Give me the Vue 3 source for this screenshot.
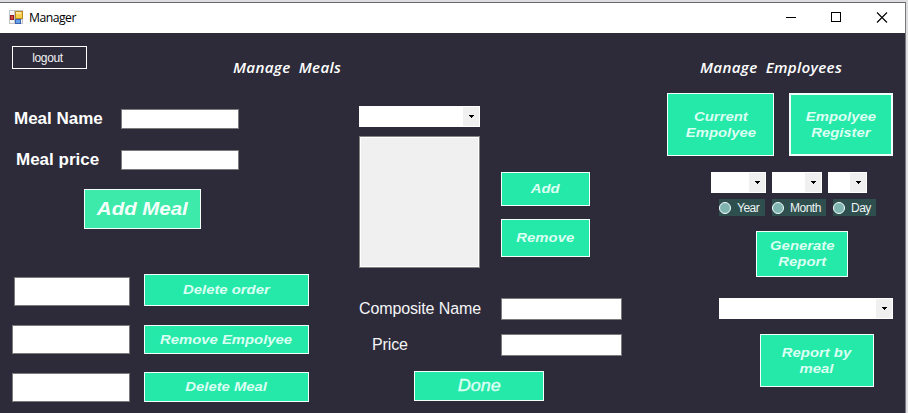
<script setup>
import { h } from 'vue'

const radios = ['Year', 'Month', 'Day']
const deletions = [
  { key: 'order', label: 'Delete order' },
  { key: 'employee', label: 'Remove Empolyee' },
  { key: 'meal', label: 'Delete Meal' },
]

// Drop-down arrow shared by every combo box
const Arrow = () =>
  h('svg', { width: 5, height: 3, viewBox: '0 0 5 3', 'shape-rendering': 'crispEdges' }, [
    h('path', { d: 'M0 0H5V1H4V2H3V3H2V2H1V1H0Z', fill: '#000' }),
  ])
</script>

<template>
  <div class="desktop">
    <div class="window">
      <header class="titlebar">
        <svg class="app-icon" width="15" height="15" viewBox="0 0 15 15">
          <rect x="0.5" y="0.5" width="13" height="13" fill="#f4f4f6" stroke="#c3c3c8" />
          <path d="M5.5 1V14M1 9.5H14" stroke="#c3c3c8" />
          <rect x="6.5" y="1.5" width="7" height="7" fill="#f7cf4b" stroke="#b98b1c" />
          <rect x="7" y="2" width="5" height="2" fill="#fce69a" />
          <rect x="1.5" y="5.5" width="3" height="4" fill="#d8453c" stroke="#8f1d1d" />
          <rect x="6.5" y="9.5" width="5" height="4" fill="#6c9de8" stroke="#3a64b4" />
        </svg>
        <span class="app-title">Manager</span>
        <svg class="controls" width="102" height="12" viewBox="0 0 102 12" fill="none" stroke="#000" shape-rendering="crispEdges">
          <path d="M0 5.5H10" />
          <rect x="45.5" y="0.5" width="9" height="9" />
          <path d="M91 0.5L101 10.5M101 0.5L91 10.5" shape-rendering="auto" stroke-width="1.1" />
        </svg>
      </header>

      <main class="content">
        <section class="col left">
          <div class="top-row">
            <button class="logout">logout</button>
            <h2 class="heading"><span class="heading-meals">Manage Meals</span></h2>
          </div>
          <div class="meal-field name">
            <label><span>Meal Name</span></label><input type="text" />
          </div>
          <div class="meal-field price">
            <label><span>Meal price</span></label><input type="text" />
          </div>
          <button class="btn add-meal"><span>Add Meal</span></button>
          <div class="deletions">
            <div v-for="d in deletions" :key="d.key" class="deletion" :class="d.key">
              <input type="text" />
              <button class="btn"><span>{{ d.label }}</span></button>
            </div>
          </div>
        </section>

        <section class="col middle">
          <div class="picker">
            <div class="lists">
              <div class="combo"><i><Arrow /></i></div>
              <div class="listbox"></div>
            </div>
            <div class="list-actions">
              <button class="btn add"><span>Add</span></button>
              <button class="btn remove"><span>Remove</span></button>
            </div>
          </div>
          <div class="comp-field">
            <label>Composite Name</label><input type="text" />
          </div>
          <div class="comp-field comp-price">
            <label>Price</label><input type="text" />
          </div>
          <button class="btn done"><span>Done</span></button>
        </section>

        <section class="col right">
          <h2 class="heading"><span class="heading-emp">Manage Employees</span></h2>
          <div class="emp-actions">
            <button class="btn current"><span>Current<br />Empolyee</span></button>
            <button class="btn register"><span>Empolyee<br />Register</span></button>
          </div>
          <div class="date-combos">
            <div class="combo year"><i><Arrow /></i></div>
            <div class="combo month"><i><Arrow /></i></div>
            <div class="combo day"><i><Arrow /></i></div>
          </div>
          <div class="radios">
            <div v-for="r in radios" :key="r" class="radio" :class="'r-' + r.toLowerCase()">
              <b></b><span>{{ r }}</span>
            </div>
          </div>
          <button class="btn generate"><span>Generate<br />Report</span></button>
          <div class="combo meal-combo"><i><Arrow /></i></div>
          <button class="btn report"><span>Report by<br />meal</span></button>
        </section>
      </main>
    </div>
  </div>
</template>

<style>
body {
  margin: 0;
  overflow: hidden;
}
</style>

<style scoped>
* {
  box-sizing: border-box;
}
.desktop {
  width: 908px;
  height: 413px;
  padding-top: 2px;
  background: #dedde0;
  font-family: "Liberation Sans", Arial, sans-serif;
}
.window {
  width: 906px;
  height: 411px;
  border-top: 1px solid #68686a;
  border-right: 1px solid #77777c;
  background: #2d2b3a;
}
.titlebar {
  display: flex;
  align-items: flex-start;
  height: 30px;
  background: #fff;
  padding-left: 9px;
}
.app-icon {
  margin-top: 7px;
}
.app-title {
  margin: 6px 0 0 5px;
  font: 12.2px/18px "Open Sans", sans-serif;
  letter-spacing: -0.5px;
  color: #000;
}
.controls {
  margin: 9px 17px 0 auto;
}
.content {
  display: flex;
  height: 380px;
}
.col {
  display: flex;
  flex-direction: column;
  align-items: flex-start;
}
.left {
  width: 350px;
}
.middle {
  width: 290px;
  padding: 73px 0 0 9px;
}
.right {
  width: 265px;
  padding-top: 23px;
}
button,
input {
  display: block;
  margin: 0;
  padding: 0;
  border-radius: 0;
  appearance: none;
}
input {
  border: 1px solid #7a7a7a;
  background: #fff;
}
.btn {
  display: flex;
  align-items: center;
  justify-content: center;
  flex: none;
  border: 1px solid #f2fffb;
  background: #25e9a9;
  color: #dcfff3;
  font: italic bold 13.5px/16px "Liberation Sans", Arial, sans-serif;
  white-space: nowrap;
}
.btn span {
  display: block;
  transform: scaleX(1.1);
}
.heading {
  margin: 0;
  font: italic 600 15.2px/22px "Open Sans", sans-serif;
  letter-spacing: 0.3px;
  word-spacing: 4px;
  color: #fff;
  white-space: nowrap;
}
.heading span {
  display: block;
}
.top-row {
  display: flex;
  padding: 13px 0 0 12px;
}
.logout {
  width: 75px;
  height: 23px;
  padding-right: 4px;
  border: 1px solid #fff;
  background: transparent;
  color: #f2f2f4;
  font: 12px/20px "Liberation Sans", Arial, sans-serif;
  letter-spacing: -0.35px;
}
.top-row .heading {
  height: 22px;
  margin: 10px 0 0 146px;
}
.meal-field {
  display: flex;
  align-items: center;
  height: 20px;
}
.meal-field label {
  width: 121px;
  padding-left: 14px;
  font-size: 17px;
  line-height: 20px;
  font-weight: bold;
  color: #fff;
  white-space: nowrap;
}
.meal-field input {
  width: 118px;
  height: 20px;
}
.meal-field.name {
  margin-top: 31px;
}
.meal-field.price {
  margin-top: 21px;
}
.meal-field.price label {
  padding-left: 16px;
}
.add-meal {
  width: 117px;
  height: 40px;
  margin: 19px 0 0 84px;
  background: #3eeaaa;
  color: #f4fffb;
  font-size: 18.6px;
}
.deletions {
  display: flex;
  flex-direction: column;
  margin-top: 45px;
  padding-left: 12px;
}
.deletion {
  display: flex;
  align-items: flex-end;
  gap: 14px;
}
.deletion input {
  width: 118px;
  height: 29px;
}
.deletion .btn {
  width: 165px;
  height: 29px;
}
.order input {
  width: 116px;
  margin-left: 2px;
}
.order .btn {
  height: 32px;
}
.employee {
  margin-top: 19px;
}
.meal {
  margin-top: 18px;
}
.meal .btn {
  height: 30px;
}
.combo {
  display: flex;
  justify-content: flex-end;
  flex: none;
  height: 21px;
  padding: 1px;
  background: #fff;
}
.combo i {
  display: flex;
  align-items: center;
  justify-content: center;
  width: 16px;
  background: #f0f0f0;
}
.picker {
  display: flex;
  gap: 21px;
}
.lists {
  display: flex;
  flex-direction: column;
  gap: 9px;
  width: 121px;
}
.listbox {
  height: 132px;
  border: 1px solid #838383;
  background: #f0f0f0;
  box-shadow: inset 0 0 0 1px #fff;
}
.list-actions {
  display: flex;
  flex-direction: column;
  gap: 13px;
  padding-top: 66px;
}
.add {
  width: 89px;
  height: 34px;
}
.remove {
  width: 89px;
  height: 38px;
}
.comp-field {
  display: flex;
  align-items: center;
  height: 22px;
  margin-top: 30px;
}
.comp-field label {
  width: 142px;
  font-size: 16px;
  letter-spacing: -0.12px;
  color: #f5f5f7;
  white-space: nowrap;
}
.comp-field input {
  width: 121px;
  height: 22px;
}
.comp-price {
  margin-top: 14px;
}
.comp-price label {
  padding-left: 13px;
}
.done {
  width: 130px;
  height: 30px;
  margin: 15px 0 0 55px;
  font-size: 17px;
  font-weight: normal;
  -webkit-text-stroke: 0.4px #dcfff3;
}
.done span {
  transform: scaleX(1.06);
}
.right .heading {
  margin-left: 60px;
}
.emp-actions {
  display: flex;
  gap: 15px;
  margin: 15px 0 0 27px;
}
.current {
  width: 107px;
  height: 63px;
}
.register {
  width: 104px;
  height: 63px;
  border-width: 2px;
}
.date-combos {
  display: flex;
  gap: 6px;
  margin: 16px 0 0 71px;
}
.year {
  width: 55px;
}
.month {
  width: 50px;
}
.day {
  width: 39px;
}
.radios {
  display: flex;
  gap: 7px;
  margin: 6px 0 0 79px;
}
.radio {
  display: flex;
  align-items: center;
  height: 17px;
  background: #2f4f4f;
  color: #eef4f4;
  font-size: 12px;
  letter-spacing: -0.5px;
  white-space: nowrap;
}
.radio b {
  width: 12px;
  height: 12px;
  border: 1px solid #f4ffff;
  border-radius: 50%;
  background: #80b4b0;
  margin-right: 6px;
}
.r-year {
  width: 46px;
}
.r-month {
  width: 54px;
}
.r-day {
  width: 43px;
}
.generate {
  width: 92px;
  height: 46px;
  margin: 15px 0 0 116px;
}
.meal-combo {
  width: 174px;
  margin: 21px 0 0 79px;
}
.report {
  width: 114px;
  height: 53px;
  margin: 15px 0 0 120px;
}
</style>
